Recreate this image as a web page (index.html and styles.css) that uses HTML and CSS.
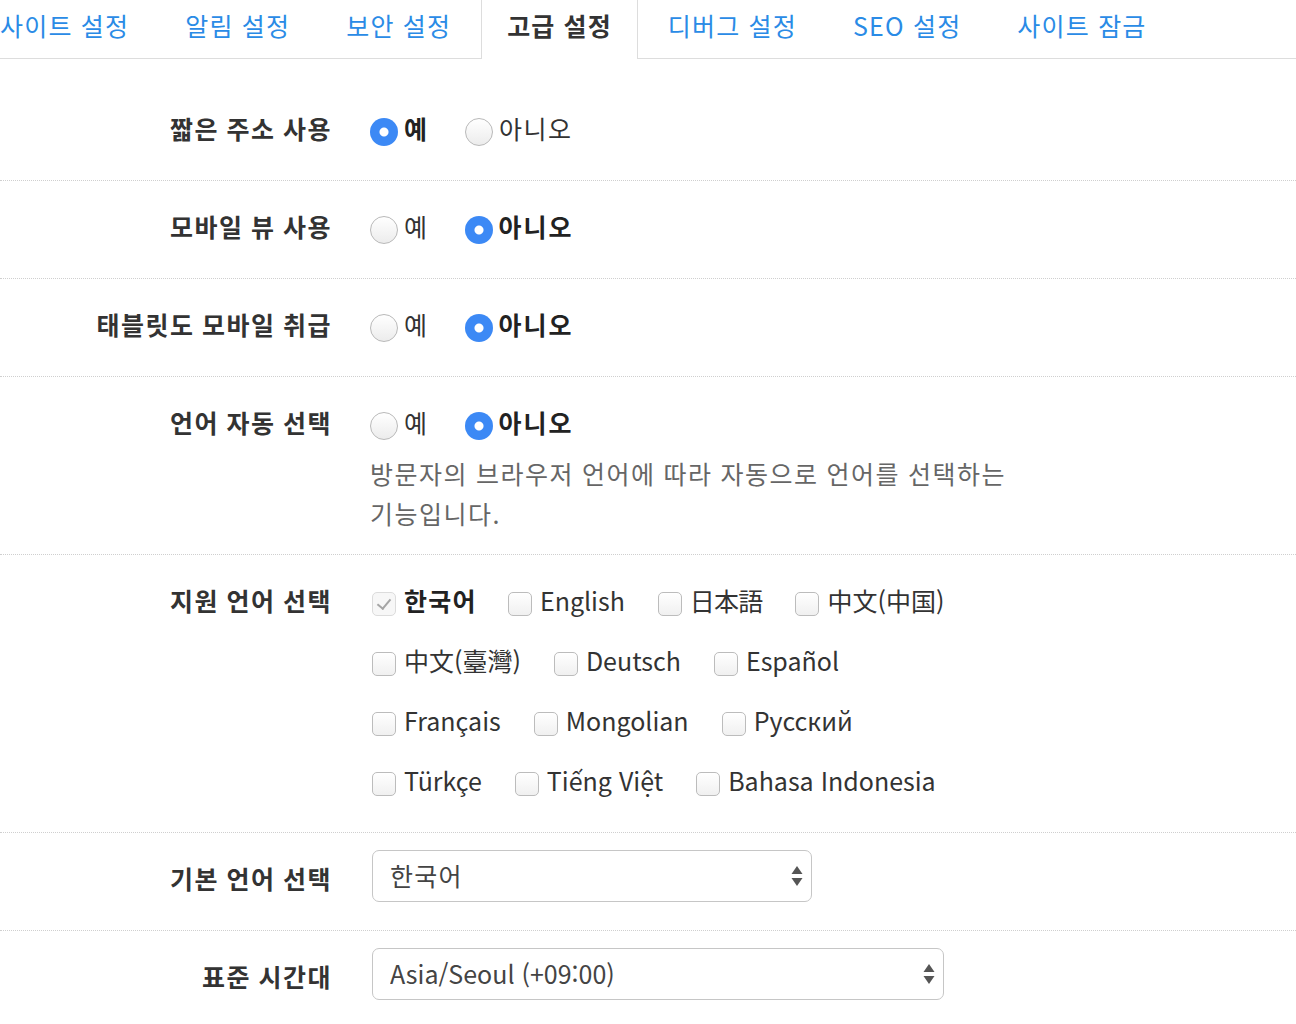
FILE: index.html
```html
<!DOCTYPE html>
<html lang="ko">
<head>
<meta charset="utf-8">
<title>고급 설정</title>
<link rel="stylesheet" href="styles.css">
</head>
<body>
<ul class="tabs">
  <li class="tab"><a href="#">사이트 설정</a></li>
  <li class="tab"><a href="#">알림 설정</a></li>
  <li class="tab"><a href="#">보안 설정</a></li>
  <li class="tab active"><a href="#">고급 설정</a></li>
  <li class="tab"><a href="#">디버그 설정</a></li>
  <li class="tab"><a href="#">SEO 설정</a></li>
  <li class="tab"><a href="#">사이트 잠금</a></li>
</ul>

<form class="form">
  <div class="row first">
    <div class="label">짧은 주소 사용</div>
    <div class="control">
      <div class="radios">
        <label class="opt on"><input type="radio" name="short" checked><span>예</span></label>
        <label class="opt"><input type="radio" name="short"><span>아니오</span></label>
      </div>
    </div>
  </div>

  <div class="row">
    <div class="label">모바일 뷰 사용</div>
    <div class="control">
      <div class="radios">
        <label class="opt"><input type="radio" name="mobile"><span>예</span></label>
        <label class="opt on"><input type="radio" name="mobile" checked><span>아니오</span></label>
      </div>
    </div>
  </div>

  <div class="row">
    <div class="label">태블릿도 모바일 취급</div>
    <div class="control">
      <div class="radios">
        <label class="opt"><input type="radio" name="tablet"><span>예</span></label>
        <label class="opt on"><input type="radio" name="tablet" checked><span>아니오</span></label>
      </div>
    </div>
  </div>

  <div class="row">
    <div class="label">언어 자동 선택</div>
    <div class="control">
      <div class="radios with-help">
        <label class="opt"><input type="radio" name="autolang"><span>예</span></label>
        <label class="opt on"><input type="radio" name="autolang" checked><span>아니오</span></label>
      </div>
      <p class="help">방문자의 브라우저 언어에 따라 자동으로 언어를 선택하는 기능입니다.</p>
    </div>
  </div>

  <div class="row">
    <div class="label">지원 언어 선택</div>
    <div class="control">
      <div class="checks">
        <div class="check-line">
          <label class="chk on"><input type="checkbox" checked disabled><span>한국어</span></label>
          <label class="chk"><input type="checkbox"><span>English</span></label>
          <label class="chk cjk"><input type="checkbox"><span>日本語</span></label>
          <label class="chk"><input type="checkbox"><span>中文(中国)</span></label>
        </div>
        <div class="check-line">
          <label class="chk"><input type="checkbox"><span>中文(臺灣)</span></label>
          <label class="chk"><input type="checkbox"><span>Deutsch</span></label>
          <label class="chk"><input type="checkbox"><span>Español</span></label>
        </div>
        <div class="check-line">
          <label class="chk"><input type="checkbox"><span>Français</span></label>
          <label class="chk"><input type="checkbox"><span>Mongolian</span></label>
          <label class="chk"><input type="checkbox"><span>Русский</span></label>
        </div>
        <div class="check-line">
          <label class="chk"><input type="checkbox"><span>Türkçe</span></label>
          <label class="chk"><input type="checkbox"><span>Tiếng Việt</span></label>
          <label class="chk"><input type="checkbox"><span>Bahasa Indonesia</span></label>
        </div>
      </div>
    </div>
  </div>

  <div class="row select-row">
    <div class="label">기본 언어 선택</div>
    <div class="control">
      <div class="select-wrap lang">
        <select class="select ko">
          <option>한국어</option>
        </select>
        <svg class="arrows" width="12" height="24" viewBox="0 0 12 24"><path d="M6 2 L11.5 10 H0.5 Z M6 22 L11.5 14 H0.5 Z" fill="#555"/></svg>
      </div>
    </div>
  </div>

  <div class="row select-row">
    <div class="label">표준 시간대</div>
    <div class="control">
      <div class="select-wrap tz">
        <select class="select">
          <option>Asia/Seoul (+09:00)</option>
        </select>
        <svg class="arrows" width="12" height="24" viewBox="0 0 12 24"><path d="M6 2 L11.5 10 H0.5 Z M6 22 L11.5 14 H0.5 Z" fill="#555"/></svg>
      </div>
    </div>
  </div>
</form>
</body>
</html>
```

FILE: styles.css
```css
html, body {
  margin: 0;
  padding: 0;
  background: #fff;
}

body {
  font-family: "Noto Sans CJK KR", "Noto Sans", sans-serif;
  font-size: 25px;
  color: #333;
  overflow: hidden;
}

/* ---------- tabs ---------- */
.tabs {
  list-style: none;
  margin: 0 0 0 -26px;
  padding: 0;
  display: flex;
  border-bottom: 1px solid #ddd;
  height: 58px;
}

.tab {
  margin-right: 4px;
  margin-bottom: -1px;
}

.tab a {
  display: flex;
  align-items: center;
  height: 49px;
  padding: 0 25px 10px;
  border: 1px solid transparent;
  border-top: 0;
  border-bottom: 0;
  color: #2a8be6;
  text-decoration: none;
  font-size: 25px;
  letter-spacing: 1.2px;
  background: transparent;
}

.tab.active a {
  border-left-color: #ddd;
  border-right-color: #ddd;
  background: #fff;
  color: #333;
  font-weight: 700;
  letter-spacing: 1.1px;
}

/* ---------- form rows ---------- */
.form {
  margin: 23px 0 0;
}

.row {
  display: flex;
  align-items: flex-start;
  border-top: 1px dotted #cfcfcf;
  padding: 29px 0 21px;
}

.row.first {
  border-top: 0;
  padding-top: 30px;
}

.label {
  width: 332px;
  flex: none;
  text-align: right;
  font-weight: 700;
  line-height: 33px;
  padding-bottom: 1px;
  color: #333;
  letter-spacing: 1.5px;
  word-spacing: -1px;
}

.control {
  margin-left: 38px;
  flex: none;
  width: 680px;
}

/* ---------- radios ---------- */
.radios {
  display: flex;
  align-items: center;
  height: 34px;
  margin-bottom: 13px;
}

.opt {
  display: flex;
  align-items: center;
  margin-right: 36px;
  color: #333;
  line-height: 33px;
  padding-bottom: 1px;
  letter-spacing: 1.5px;
}

.opt span {
  margin-left: 6px;
}

.opt.on span {
  font-weight: 700;
  color: #222;
  letter-spacing: 2px;
}

.opt input {
  appearance: none;
  -webkit-appearance: none;
  margin: 7px 0 0;
  width: 28px;
  height: 28px;
  border-radius: 50%;
  border: 1px solid #b9b9b9;
  background: linear-gradient(#ffffff, #ececec);
  box-sizing: border-box;
}

.opt input:checked {
  border: 0;
  background: radial-gradient(circle, #fff 0, #fff 4px, #3c89f5 5px, #3c89f5 100%);
}

/* ---------- help ---------- */
.help {
  margin: 0;
  font-size: 25px;
  line-height: 40px;
  color: #666;
  width: 660px;
  letter-spacing: 1.5px;
  word-spacing: -0.5px;
}

/* ---------- checkboxes ---------- */
.checks {
  display: flex;
  flex-direction: column;
  gap: 26px;
  margin: 0 0 13px 2px;
}

.check-line {
  display: flex;
  align-items: center;
  height: 34px;
}

.chk {
  display: flex;
  align-items: center;
  margin-right: 33px;
  line-height: 33px;
  padding-bottom: 1px;
  color: #333;
}

.chk span {
  margin-left: 8px;
}

.chk.cjk span {
  letter-spacing: -0.8px;
}

.chk.on span {
  font-weight: 700;
  color: #222;
  letter-spacing: 1.3px;
}

.chk.on {
  margin-right: 31px;
}

.chk input {
  appearance: none;
  -webkit-appearance: none;
  position: relative;
  margin: 6px 0 0;
  width: 24px;
  height: 24px;
  border: 1px solid #bcbcbc;
  border-radius: 5px;
  background: linear-gradient(#ffffff, #f0f0f0);
  box-sizing: border-box;
}

.chk input:checked:disabled {
  border-color: #dcdcdc;
  background: #f7f7f7;
}

.chk input:checked::after {
  content: "";
  position: absolute;
  left: 7px;
  top: 3px;
  width: 6px;
  height: 11px;
  border-right: 2px solid #a5a5a5;
  border-bottom: 2px solid #a5a5a5;
  transform: rotate(40deg);
}

/* ---------- selects ---------- */
.row.select-row {
  padding: 17px 0 28px;
}

.select-row .label {
  padding-top: 12px;
}

.select-wrap {
  position: relative;
  margin-left: 2px;
}

.select-wrap.lang {
  width: 440px;
}

.select-wrap.tz {
  width: 572px;
}

.select {
  appearance: none;
  -webkit-appearance: none;
  display: block;
  width: 100%;
  height: 52px;
  box-sizing: border-box;
  padding: 0 40px 3px 17px;
  border: 1px solid #c6c6c6;
  border-radius: 7px;
  background: #fff;
  font-family: "Noto Sans CJK KR", "Noto Sans", sans-serif;
  font-size: 25px;
  color: #444;
}

.select.ko {
  letter-spacing: 1.3px;
}

.arrows {
  position: absolute;
  right: 9px;
  top: 14px;
  pointer-events: none;
}
```
